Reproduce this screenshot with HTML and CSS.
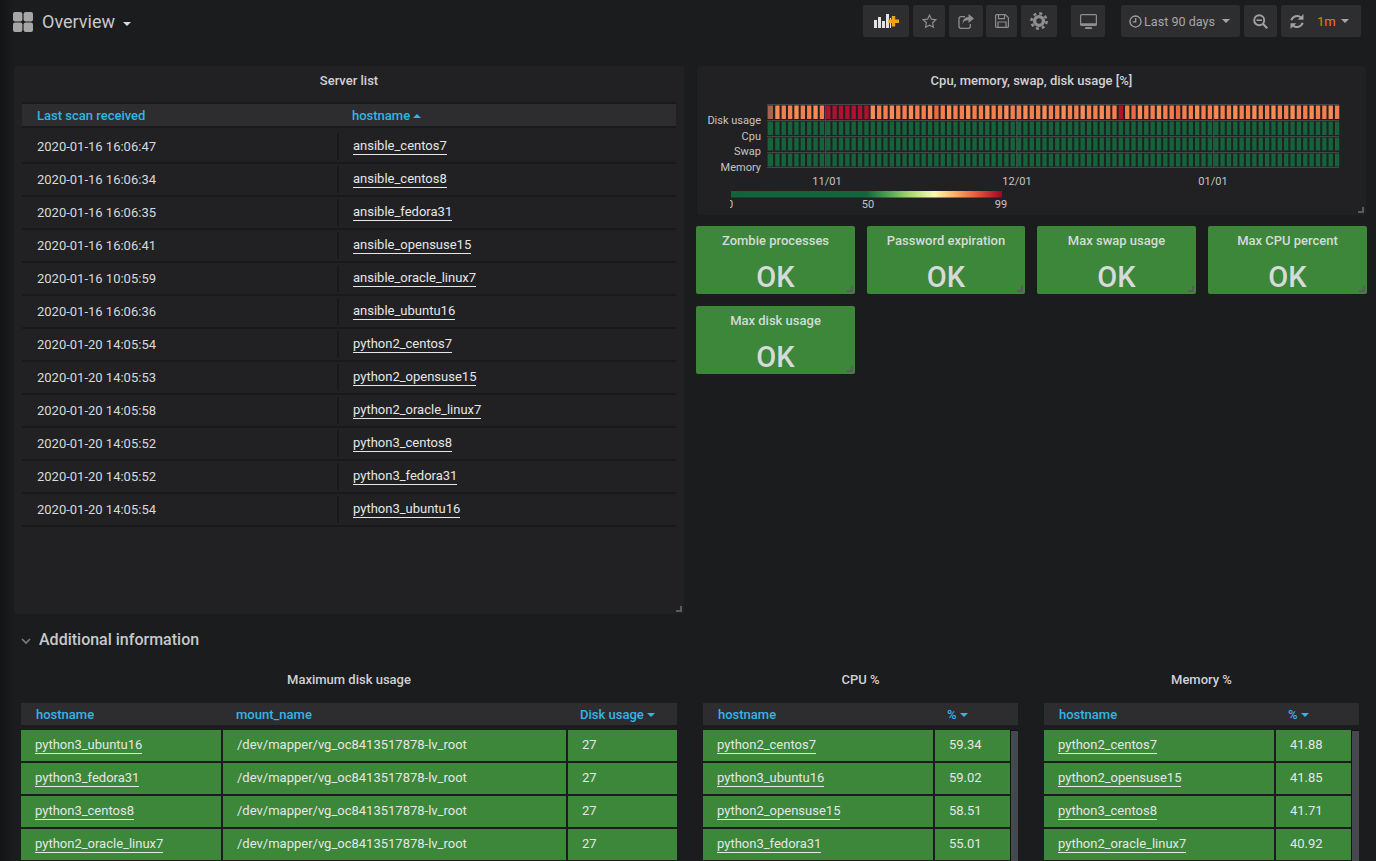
FILE: index.html
```html
<!DOCTYPE html>
<html lang="en">
<head>
    <meta charset="UTF-8">
    <title>Overview - Grafana</title>
    <link rel="stylesheet" href="styles.css">
</head>
<body>
    <header class="navbar">
        <div class="navbar-title">
            <svg class="grid-icon" width="20" height="20" viewBox="0 0 20 20">
                <rect x="0" y="0" width="9.4" height="9.4" rx="2"/>
                <rect x="10.6" y="0" width="9.4" height="9.4" rx="2"/>
                <rect x="0" y="10.6" width="9.4" height="9.4" rx="2"/>
                <rect x="10.6" y="10.6" width="9.4" height="9.4" rx="2"/>
            </svg>
            <span class="dash-name">Overview</span>
            <span class="title-caret"></span>
        </div>
        <div class="navbar-buttons">
            <button class="nav-btn btn-add">
                <svg width="25" height="14" viewBox="0 0 25 14">
                    <path fill="#e3e3e3" d="M0 6h3v8H0zM4 3h3v11H4zM8 7h3v7H8zM12 0h3v14h-3z"/>
                    <path fill="#e3e3e3" d="M16 4h1v10h-1z"/>
                    <path fill="#f6a11c" d="M17.800 2h3.400v3.600H25v3.300h-3.800v3.600h-3.400V8.900H14.300V5.600h3.500z"/>
                </svg>
            </button>
            <button class="nav-btn btn-star">
                <svg width="15" height="15" viewBox="0 0 15 15"><path fill="none" stroke="#8e8e8e" stroke-width="1.200" d="M7.500 1.200l1.900 4 4.400.6-3.200 3 .8 4.400-3.900-2.100-3.900 2.100.8-4.400-3.200-3 4.400-.6z"/></svg>
            </button>
            <button class="nav-btn btn-share">
                <svg width="16" height="15" viewBox="0 0 16 15">
                    <path fill="none" stroke="#8e8e8e" stroke-width="1.300" d="M7 2.700H3a2 2 0 0 0-2 2v7.600a2 2 0 0 0 2 2h7.300a2 2 0 0 0 2-2V10"/>
                    <path fill="#8e8e8e" d="M10.500 0L16 4.500 10.500 9V6.300C7.500 6.300 5.400 7 4.700 10.300 4.300 5.800 6.800 3 10.500 2.900z"/>
                </svg>
            </button>
            <button class="nav-btn btn-save">
                <svg width="14" height="14" viewBox="0 0 14 14">
                    <path fill="none" stroke="#8e8e8e" stroke-width="1.200" d="M1.600.6h8.700l3.100 3.100v8.700a1 1 0 0 1-1 1H1.600a1 1 0 0 1-1-1V1.600a1 1 0 0 1 1-1z"/>
                    <path fill="none" stroke="#8e8e8e" stroke-width="1.200" d="M3.500 1v3.600h6V1M3 13V8h8v5"/>
                </svg>
            </button>
            <button class="nav-btn btn-cog">
                <svg width="18" height="18" viewBox="0 0 18 18">
                    <circle cx="9" cy="9" r="7.600" fill="none" stroke="#8e8e8e" stroke-width="2.600" stroke-dasharray="3 2.970"/>
                    <circle cx="9" cy="9" r="4.400" fill="none" stroke="#8e8e8e" stroke-width="3.400"/>
                </svg>
            </button>
            <button class="nav-btn btn-tv">
                <svg width="17" height="15" viewBox="0 0 17 15">
                    <path fill="#8e8e8e" d="M1.500 0h14A1.500 1.500 0 0 1 17 1.500v9a1.500 1.500 0 0 1-1.500 1.500h-14A1.500 1.500 0 0 1 0 10.500v-9A1.500 1.500 0 0 1 1.500 0zM1.200 1.200V9.300h14.600V1.200zM5.500 13h6l.8 2H4.700z"/>
                </svg>
            </button>
            <button class="nav-btn btn-time">
                <svg width="13" height="13" viewBox="0 0 12 12">
                    <circle cx="6" cy="6" r="5.100" fill="none" stroke="#a0a0a0" stroke-width="1.200"/>
                    <path fill="none" stroke="#a0a0a0" stroke-width="1.200" d="M6.200 2.800v3.600H3.500"/>
                </svg>
                <span>Last 90 days</span>
                <span class="btn-caret"></span>
            </button>
            <button class="nav-btn btn-zoom">
                <svg width="15" height="15" viewBox="0 0 15 15">
                    <circle cx="6.200" cy="6.200" r="5" fill="none" stroke="#a0a0a0" stroke-width="1.900"/>
                    <path fill="none" stroke="#a0a0a0" stroke-width="2.200" d="M9.800 9.800l4.400 4.400"/>
                    <path fill="none" stroke="#a0a0a0" stroke-width="1.600" d="M3.500 6.200h5.400"/>
                </svg>
            </button>
            <div class="nav-btn btn-refresh">
                <svg width="14" height="15" viewBox="0 0 14 15">
                    <path fill="none" stroke="#a0a0a0" stroke-width="2.100" d="M1.400 6.200A5.800 5.800 0 0 1 11 3.600"/>
                    <path fill="#a0a0a0" d="M13.500 0v5.800H7.700z"/>
                    <path fill="none" stroke="#a0a0a0" stroke-width="2.100" d="M12.600 8.800A5.800 5.800 0 0 1 3 11.400"/>
                    <path fill="#a0a0a0" d="M.5 15V9.200h5.800z"/>
                </svg>
                <span class="interval">1m</span>
                <span class="btn-caret"></span>
            </div>
        </div>
    </header>

    <main class="dashboard">
        <div class="top-row">
            <section class="panel server-panel">
                <h3 class="panel-title">Server list</h3>
                <div class="server-table">
                    <div class="server-head">
                        <span>Last scan received</span>
                        <span>hostname <i class="sort-up"></i></span>
                    </div>
                    <div class="server-row"><span>2020-01-16 16:06:47</span><span><a>ansible_centos7</a></span></div>
                    <div class="server-row"><span>2020-01-16 16:06:34</span><span><a>ansible_centos8</a></span></div>
                    <div class="server-row"><span>2020-01-16 16:06:35</span><span><a>ansible_fedora31</a></span></div>
                    <div class="server-row"><span>2020-01-16 16:06:41</span><span><a>ansible_opensuse15</a></span></div>
                    <div class="server-row"><span>2020-01-16 10:05:59</span><span><a>ansible_oracle_linux7</a></span></div>
                    <div class="server-row"><span>2020-01-16 16:06:36</span><span><a>ansible_ubuntu16</a></span></div>
                    <div class="server-row"><span>2020-01-20 14:05:54</span><span><a>python2_centos7</a></span></div>
                    <div class="server-row"><span>2020-01-20 14:05:53</span><span><a>python2_opensuse15</a></span></div>
                    <div class="server-row"><span>2020-01-20 14:05:58</span><span><a>python2_oracle_linux7</a></span></div>
                    <div class="server-row"><span>2020-01-20 14:05:52</span><span><a>python3_centos8</a></span></div>
                    <div class="server-row"><span>2020-01-20 14:05:52</span><span><a>python3_fedora31</a></span></div>
                    <div class="server-row"><span>2020-01-20 14:05:54</span><span><a>python3_ubuntu16</a></span></div>
                </div>
            </section>

            <div class="right-col">
                <section class="panel heatmap-panel">
                    <h3 class="panel-title">Cpu, memory, swap, disk usage [%]</h3>
                    <svg id="heatmap" class="heatmap" width="669" height="115" viewBox="0 0 669 115">
                        <defs>
                            <linearGradient id="legendGrad">
                                <stop offset="0" stop-color="#11643a"/>
                                <stop offset="0.5" stop-color="#12663a"/>
                                <stop offset="0.58" stop-color="#4fa455"/>
                                <stop offset="0.66" stop-color="#a9d870"/>
                                <stop offset="0.75" stop-color="#fbfbb3"/>
                                <stop offset="0.82" stop-color="#fdb768"/>
                                <stop offset="0.9" stop-color="#ec5e3e"/>
                                <stop offset="1" stop-color="#a50026"/>
                            </linearGradient>
                        </defs>
                        <g id="cells"></g>
                        <g class="axis-labels" text-anchor="end">
                            <text x="64" y="24">Disk usage</text>
                            <text x="64" y="40">Cpu</text>
                            <text x="64" y="55">Swap</text>
                            <text x="64" y="71">Memory</text>
                        </g>
                        <g class="axis-labels" text-anchor="middle">
                            <text x="130" y="85">11/01</text>
                            <text x="320" y="85">12/01</text>
                            <text x="516" y="85">01/01</text>
                            <text x="171" y="108">50</text>
                            <text x="304" y="108">99</text>
                        </g>
                        <rect x="34" y="91" width="271" height="6.500" fill="url(#legendGrad)"/>
                        <text class="axis-labels" x="33" y="108" text-anchor="middle" clip-path="inset(0 0 0 50%)">0</text>
                    </svg>
                </section>

                <div class="stat-grid">
                    <div class="stat"><div class="stat-title">Zombie processes</div><div class="stat-value">OK</div></div>
                    <div class="stat"><div class="stat-title">Password expiration</div><div class="stat-value">OK</div></div>
                    <div class="stat"><div class="stat-title">Max swap usage</div><div class="stat-value">OK</div></div>
                    <div class="stat"><div class="stat-title">Max CPU percent</div><div class="stat-value">OK</div></div>
                    <div class="stat"><div class="stat-title">Max disk usage</div><div class="stat-value">OK</div></div>
                </div>
            </div>
        </div>

        <div class="row-title">
            <svg width="10" height="7" viewBox="0 0 10 7"><path fill="none" stroke="#7b7b7e" stroke-width="1.700" d="M1 1l4 4 4-4"/></svg>
            <span>Additional information</span>
        </div>

        <div class="bottom-row">
            <section class="table-panel disk-panel">
                <h3 class="panel-title">Maximum disk usage</h3>
                <div class="data-head">
                    <span>hostname</span><span>mount_name</span><span>Disk usage <i class="sort-down"></i></span>
                </div>
                <div class="data-body">
                    <div class="data-rows">
                        <div class="data-row"><span><a>python3_ubuntu16</a></span><span>/dev/mapper/vg_oc8413517878-lv_root</span><span>27</span></div>
                        <div class="data-row"><span><a>python3_fedora31</a></span><span>/dev/mapper/vg_oc8413517878-lv_root</span><span>27</span></div>
                        <div class="data-row"><span><a>python3_centos8</a></span><span>/dev/mapper/vg_oc8413517878-lv_root</span><span>27</span></div>
                        <div class="data-row"><span><a>python2_oracle_linux7</a></span><span>/dev/mapper/vg_oc8413517878-lv_root</span><span>27</span></div>
                    </div>
                </div>
            </section>

            <section class="table-panel small-panel cpu-panel">
                <h3 class="panel-title">CPU %</h3>
                <div class="data-head">
                    <span>hostname</span><span>% <i class="sort-down"></i></span>
                </div>
                <div class="data-body">
                    <div class="data-rows">
                        <div class="data-row"><span><a>python2_centos7</a></span><span>59.34</span></div>
                        <div class="data-row"><span><a>python3_ubuntu16</a></span><span>59.02</span></div>
                        <div class="data-row"><span><a>python2_opensuse15</a></span><span>58.51</span></div>
                        <div class="data-row"><span><a>python3_fedora31</a></span><span>55.01</span></div>
                    </div>
                    <div class="scrollbar"></div>
                </div>
            </section>

            <section class="table-panel small-panel mem-panel">
                <h3 class="panel-title">Memory %</h3>
                <div class="data-head">
                    <span>hostname</span><span>% <i class="sort-down"></i></span>
                </div>
                <div class="data-body">
                    <div class="data-rows">
                        <div class="data-row"><span><a>python2_centos7</a></span><span>41.88</span></div>
                        <div class="data-row"><span><a>python2_opensuse15</a></span><span>41.85</span></div>
                        <div class="data-row"><span><a>python3_centos8</a></span><span>41.71</span></div>
                        <div class="data-row"><span><a>python2_oracle_linux7</a></span><span>40.92</span></div>
                    </div>
                    <div class="scrollbar"></div>
                </div>
            </section>
        </div>
    </main>

    <script src="heatmap.js"></script>
</body>
</html>
```

FILE: styles.css
```css
html, body {
    height: 861px;
    overflow: hidden;
}
body {
    margin: 0;
    font-family: Roboto, sans-serif;
    font-size: 13px;
    color: #d8d9da;
    background: linear-gradient(90deg, #131416 0, #1b1c1e 14px);
}
a {
    color: #e6e6e6;
    border-bottom: 1px solid #e6e6e6;
    padding-bottom: 1px;
}

/* top bar */
.navbar {
    display: flex;
    justify-content: space-between;
    height: 44px;
    padding: 5px 15px 0 13px;
    box-sizing: border-box;
}
.navbar-title {
    display: flex;
    align-items: center;
    height: 34px;
}
.grid-icon {
    fill: #a6a6a6;
}
.dash-name {
    margin: 0 0 2px 9px;
    font-size: 18px;
    color: #c7c8ca;
}
.title-caret {
    margin: 4px 0 0 8px;
    border: 4px solid transparent;
    border-top-color: #d8d9da;
    border-bottom: 0;
}
.navbar-buttons {
    display: flex;
    gap: 4px;
}
.nav-btn {
    display: flex;
    align-items: center;
    justify-content: center;
    height: 32px;
    padding: 0;
    border: 0;
    border-radius: 2px;
    background: #2e2e31;
    color: #a6a6a6;
    font-family: inherit;
    font-size: 13px;
}
.btn-add { width: 46px; }
.btn-star { width: 32px; }
.btn-share { width: 34px; }
.btn-save { width: 31px; margin-left: -1px; }
.btn-cog { width: 36px; }
.btn-tv { width: 34px; margin-left: 10px; }
.btn-time {
    width: 119px;
    margin-left: 12px;
    padding-left: 8px;
    justify-content: flex-start;
    gap: 2px;
    font-size: 12.600px;
    box-sizing: border-box;
}
.btn-zoom { width: 33px; }
.btn-refresh {
    width: 80px;
    padding-left: 9px;
    justify-content: flex-start;
    box-sizing: border-box;
}
.btn-caret {
    margin-left: 5px;
    border: 4px solid transparent;
    border-top-color: #a6a6a6;
    border-bottom: 0;
}
.interval {
    color: #eb7b18;
    margin-left: 13px;
}

/* panels */
.dashboard {
    padding: 22px 9px 0 14px;
}
.top-row {
    display: flex;
    gap: 12px;
    height: 548px;
}
.panel {
    background: #212124;
    border-radius: 3px;
}
.panel-title {
    margin: 0;
    font-size: 13px;
    font-weight: 500;
    line-height: 16px;
    text-align: center;
    color: #d0d1d3;
}
.server-panel {
    position: relative;
    width: 670px;
    padding: 7px 8px 0;
    box-sizing: border-box;
}
.server-panel::after, .heatmap-panel::after, .stat::after {
    content: "";
    position: absolute;
    right: 2px;
    bottom: 2px;
    width: 4px;
    height: 4px;
    border-right: 2px solid #5b5b5e;
    border-bottom: 2px solid #5b5b5e;
}
.server-table {
    margin-top: 13px;
}
.server-head {
    display: grid;
    grid-template-columns: 316px 1fr;
    height: 22px;
    line-height: 23px;
    background: #2d2d30;
    border-top: 2px solid #18191b;
    border-bottom: 2px solid #18191b;
    color: #33b5e5;
    font-weight: 500;
}
.server-head span {
    padding-left: 15px;
}
.server-head span + span {
    padding-left: 14px;
}
.sort-up, .sort-down {
    display: inline-block;
    vertical-align: 2px;
    border: 4px solid transparent;
    border-bottom-color: #33b5e5;
    border-top: 0;
}
.sort-down {
    border-top: 4px solid #33b5e5;
    border-bottom: 0;
}
.server-row {
    display: grid;
    grid-template-columns: 315px 1fr;
    height: 33px;
    line-height: 31px;
    border-bottom: 2px solid #18191b;
    box-sizing: border-box;
}
.server-row:nth-child(2) {
    margin-top: 3px;
}
.server-row span {
    padding-left: 15px;
}
.server-row span + span {
    border-left: 2px solid #18191b;
    margin: 2px 0;
    line-height: 26px;
    padding-left: 14px;
}

/* right column */
.right-col {
    width: 671px;
}
.heatmap-panel {
    position: relative;
    height: 149px;
    margin: 0 1px 11px 1px;
    padding-top: 7px;
    box-sizing: border-box;
}
.heatmap {
    display: block;
    margin-top: 11px;
}
.axis-labels {
    fill: #c4c5c7;
    font-size: 11px;
    font-family: Roboto, sans-serif;
}
.stat-grid {
    display: grid;
    grid-template-columns: 159px 158px 159px 159px;
    gap: 12px;
}
.stat {
    position: relative;
    height: 68px;
    padding-top: 7px;
    box-sizing: border-box;
    background: #3c873a;
    border-radius: 2px;
    text-align: center;
}
.stat-title {
    font-weight: 500;
    line-height: 16px;
    color: #d8d9da;
}
.stat-value {
    margin-top: 11px;
    font-size: 29px;
    font-weight: 500;
    line-height: 34px;
    color: #d8d9da;
}

/* additional information */
.row-title {
    display: flex;
    align-items: center;
    gap: 8px;
    height: 20px;
    margin: 15px 0 0 7px;
    font-size: 16px;
    font-weight: 500;
    color: #c7c8ca;
}
.row-title svg {
    margin-top: 4px;
}
.bottom-row {
    display: flex;
    margin-top: 22px;
}
.table-panel .panel-title {
    height: 31px;
    padding-top: 1px;
}
.disk-panel {
    width: 656px;
    margin-left: 7px;
}
.small-panel {
    width: 315px;
    margin-left: 26px;
}
.data-head {
    display: grid;
    height: 22px;
    line-height: 24px;
    background: #2d2d30;
    color: #33b5e5;
    font-weight: 500;
}
.data-head span {
    padding-left: 15px;
}
.disk-panel .data-head span:last-child {
    padding-left: 16px;
}
.small-panel .data-head span:last-child {
    padding-left: 14px;
}
.data-body {
    display: flex;
    margin-top: 5px;
}
.data-rows {
    flex: 1;
    display: flex;
    flex-direction: column;
    gap: 2px;
}
.data-row {
    display: grid;
    column-gap: 2px;
    height: 31px;
    line-height: 30px;
}
.data-row span {
    padding-left: 14px;
    background: #3c873a;
    color: #e6e6e6;
}
.disk-panel .data-head, .disk-panel .data-row {
    grid-template-columns: 200px 343px 1fr;
}
.small-panel .data-head {
    grid-template-columns: 230px 1fr;
}
.small-panel .data-row {
    grid-template-columns: 230px 75px;
}
.scrollbar {
    width: 7px;
    height: 140px;
    background: #47474f;
    border-left: 1px solid #101113;
    border-top: 1px solid #101113;
}
```

FILE: heatmap.js
```js
// draws the day cells of the heatmap, one column per day
var PITCH = 6.36;
var rows = [
    { y: 5.5, h: 13.5 },
    { y: 21.5, h: 13.5 },
    { y: 37.5, h: 13 },
    { y: 53.5, h: 13 }
];
var GRID_LINES = [4, 20, 36, 52, 67];
var RED_DAYS = [9, 10, 11, 12, 13, 14, 15, 55];
var svgNS = 'http://www.w3.org/2000/svg';
var cells = document.getElementById('cells');

function addRect(parent, x, y, w, h, color) {
    var r = document.createElementNS(svgNS, 'rect');
    r.setAttribute('x', x);
    r.setAttribute('y', y);
    r.setAttribute('width', w);
    r.setAttribute('height', h);
    r.setAttribute('fill', color);
    parent.appendChild(r);
}

function diskColor(day) {
    if (RED_DAYS.indexOf(day) !== -1) return '#b30f2e';
    if (day === 0) return '#a8654a';
    if (day === 26 || day === 57 || day === 64) return '#ea6a41';
    return day % 3 === 1 ? '#fb8b55' : '#f67d4c';
}

// grid lines first, cells go over them
GRID_LINES.forEach(function (y) {
    addRect(cells, 70, y, 572, 1, '#46464a');
});
[128, 319, 516].forEach(function (x) {
    addRect(cells, x, 4, 1, 64, '#46464a');
});

rows.forEach(function (row, index) {
    for (var day = 0; day < 90; day++) {
        var x = 71.9 + PITCH * day;
        var width = 4.3;
        if (day === 0) {
            x = 70.6;
            width = 5.4;
        }
        var color = index === 0 ? diskColor(day) : '#14633a';
        addRect(cells, x, row.y, width, row.h, color);
    }
});
```
